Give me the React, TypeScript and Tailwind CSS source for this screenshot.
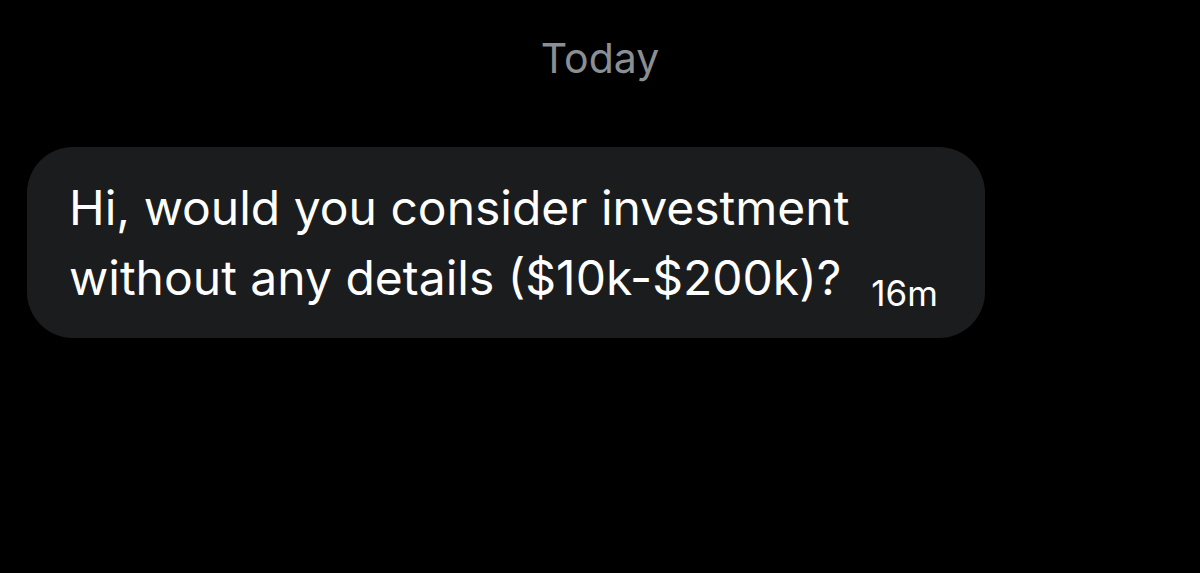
export default function App() {
  return (
    <div className="w-[1200px] h-[573px] bg-black overflow-hidden font-['Inter',sans-serif]">
      <div className="flex justify-center pt-[33px] text-[41px] leading-[50px] text-[#8b8f93]">Today</div>
      <div className="pl-[27px] pt-[64px]">
        <div className="inline-flex items-end w-[958px] h-[191px] rounded-[46px] bg-[#1b1c1e] pl-[42px] pr-[42px] pb-[25px]">
          <p className="text-[48px] leading-[70px] text-white">
            Hi, would you consider investment
            <br />
            without any details ($10k-$200k)?
          </p>
          <span className="ml-[22px] mb-[2px] text-[35px] leading-[35px] text-white">16m</span>
        </div>
      </div>
    </div>
  );
}
